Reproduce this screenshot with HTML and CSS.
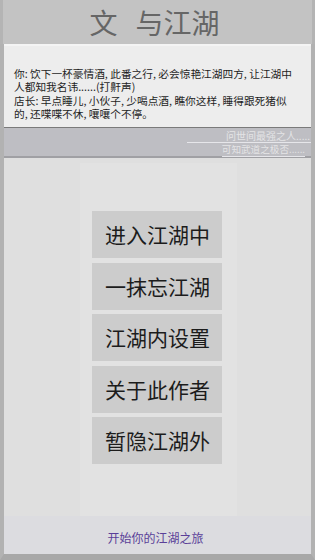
FILE: index.html
```html
<!DOCTYPE html>
<html lang="zh">
<head>
<meta charset="utf-8">
<title>文 与江湖</title>
<link rel="stylesheet" href="styles.css">
</head>
<body>
<div class="app">
  <header class="header"><span class="t1">文</span><span>与江湖</span></header>
  <div class="frame">
    <div class="dialog">
      <p>你: 饮下一杯豪情酒, 此番之行, 必会惊艳江湖四方, 让江湖中<br>人都知我名讳......(打鼾声)</p>
      <p>店长: 早点睡儿, 小伙子, 少喝点酒, 瞧你这样, 睡得跟死猪似<br>的, 还喋喋不休, 嚷嚷个不停。</p>
    </div>
    <div class="band">
      <div class="verse v1">问世间最强之人.....</div>
      <div class="verse v2">可知武道之极否......</div>
    </div>
    <main class="main">
      <div class="column">
        <button class="btn">进入江湖中</button>
        <button class="btn">一抹忘江湖</button>
        <button class="btn">江湖内设置</button>
        <button class="btn">关于此作者</button>
        <button class="btn">暂隐江湖外</button>
      </div>
    </main>
    <footer class="footer">开始你的江湖之旅</footer>
  </div>
</div>
</body>
</html>
```
FILE: styles.css
```css
* { box-sizing: border-box; }
html, body { margin: 0; padding: 0; }
body {
  width: 315px;
  height: 560px;
  overflow: hidden;
  font-family: "Noto Sans CJK SC", "Noto Sans", sans-serif;
  background: #a9a9a9;
}
.app {
  width: 315px;
  height: 560px;
  display: flex;
  flex-direction: column;
  background: #c3c3c3;
}
.header {
  height: 44px;
  flex: none;
  display: flex;
  align-items: center;
  justify-content: center;
  font-size: 28px;
  line-height: 1;
  color: #666666;
  background: #c3c3c3;
  border-left: 3px solid #b4b4b4;
  border-right: 3px solid #b4b4b4;
  padding-right: 6px;
}
.header .t1 { margin-right: 18px; }
.frame {
  flex: 1;
  display: flex;
  flex-direction: column;
  border-left: 4px solid #b2b2b2;
  border-right: 4px solid #b2b2b2;
  border-bottom: 6px solid #a8a8a8;
  background: #e0e0e0;
}
.dialog {
  height: 84px;
  flex: none;
  background: #ededed;
  border-top: 2px solid #f4f4f4;
  border-bottom: 1px solid #7a7a7a;
  padding: 21px 4px 0 10px;
  font-size: 10.7px;
  line-height: 13.3px;
  color: #1e1e1e;
  white-space: nowrap;
}
.dialog p { margin: 0; }
.band {
  height: 30px;
  flex: none;
  background: #bebec3;
  border-bottom: 2px solid #a0a0a4;
  display: flex;
  flex-direction: column;
  align-items: flex-end;
  padding-top: 1px;
  font-size: 10px;
  line-height: 13px;
  color: #e4e4e6;
}
.verse {
  border-bottom: 1px solid #e6e6ea;
  white-space: nowrap;
}
.v1 { width: 124px; text-align: right; padding-right: 1px; }
.v2 { margin-right: 6px; font-size: 9.6px; }
.main {
  flex: 1;
  display: flex;
  padding: 5px 0 0 76px;
  background: #dfdfdf;
}
.column {
  width: 157px;
  background: #e2e2e2;
  display: flex;
  flex-direction: column;
  gap: 4.5px;
  padding: 48px 0 0 12px;
}
.btn {
  width: 130px;
  height: 47px;
  flex: none;
  border: none;
  margin: 0;
  padding: 0 0 0 1px;
  background: #cccccc;
  font-family: "Noto Sans CJK SC", "Noto Sans", sans-serif;
  font-size: 21px;
  color: #1c1c1c;
  text-align: center;
  line-height: 47px;
}
.footer {
  height: 38px;
  flex: none;
  background: #dcdce0;
  text-align: center;
  font-size: 12px;
  line-height: 44px;
  color: #5a3f98;
  padding-right: 4px;
}
```
